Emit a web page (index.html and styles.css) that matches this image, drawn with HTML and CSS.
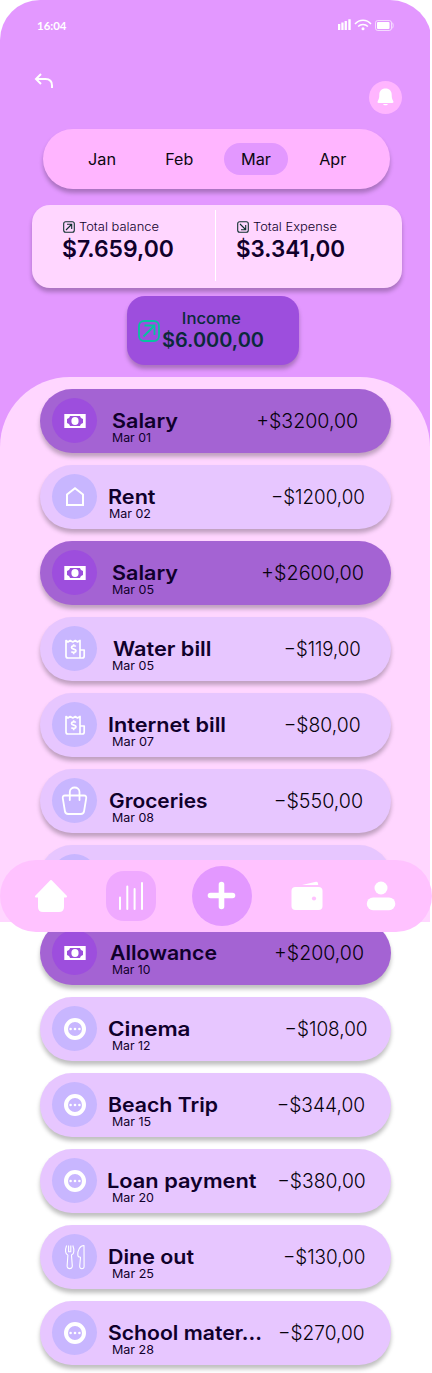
FILE: index.html
```html
<!DOCTYPE html>
<html lang="en">
<head>
<meta charset="utf-8">
<meta name="viewport" content="width=device-width, initial-scale=1">
<title>Transactions</title>
<link rel="stylesheet" href="styles.css">
</head>
<body>
<svg class="sprite" aria-hidden="true">
  <symbol id="cash" viewBox="0 0 45 45">
    <path fill="#fff" d="M12.300 16h21.400v14H12.300z"/>
    <path fill="#9d4edd" d="M18 18h10c.5 2 1.500 2.500 3 3v4c-1.500.5-2.500 1-3 3H18c-.5-2-1.500-2.500-3-3v-4c1.500-.5 2.500-1 3-3z"/>
    <ellipse cx="23" cy="23" rx="3.600" ry="4" fill="#fff"/>
  </symbol>
  <symbol id="home-line" viewBox="0 0 45 45">
    <path class="line" d="M15 31V20.500l8-6.200 8 6.200V31z"/>
  </symbol>
  <symbol id="bill" viewBox="0 0 45 45">
    <path class="line thin" d="M14 14.500l2 1.500 2.200-1.500 2.600 1.500 2.500-1.500 2.200 1.500 2.500-1.500V32H16a2 2 0 0 1-2-2zM28 24h4.200v6a2 2 0 0 1-2 2H28"/>
    <path class="line thin" d="M23.800 20.500c-1-1.200-4.300-.9-4.300 1s4.500 1.300 4.500 3.300-3.600 2.100-4.600.7M21.700 18.300v1.500M21.700 26.200v2"/>
  </symbol>
  <symbol id="bag" viewBox="0 0 45 45">
    <path class="line soft" d="M13 17.500h19c1.800 0 2.500 1.200 2.200 2.800l-2.100 12.700c-.3 2-1.500 3-3.300 3H16.200c-1.800 0-3-1-3.300-3l-2.100-12.700C10.500 18.700 11.200 17.500 13 17.500zM17.800 22V14c0-6 9.700-6 9.700 0v8"/>
  </symbol>
  <symbol id="more" viewBox="0 0 45 45">
    <circle cx="23" cy="23" r="9" fill="none" stroke="#fff" stroke-width="4"/>
    <circle cx="18.600" cy="23" r="1.300" fill="#fff"/><circle cx="23" cy="23" r="1.300" fill="#fff"/><circle cx="27.400" cy="23" r="1.300" fill="#fff"/>
  </symbol>
  <symbol id="dine" viewBox="0 0 45 45">
    <path class="line fine" d="M14.600 11.500c-.8 2-1.200 4-1 6.200.1 1.800 1 2.600 2.300 3.400l-.8 11c-.1 3.300 5.300 3.300 5.200 0l-.8-11c1.400-.8 2.200-1.600 2.300-3.400.2-2.200-.2-4.200-1-6.200M16.600 11.500v6.300h2.200v-6.300M18.800 17.800M32 11.500c-4 0-6.500 4.500-6.200 9.800.1 1.500.8 2 2.700 2l-.8 9c-.1 3.200 4.600 3.200 4.400 0z"/>
  </symbol>
</svg>

<main class="screen">
  <header class="status">
    <span class="clock" data-fit="29.5">16:04</span>
    <svg class="signals" viewBox="0 0 58 14" aria-hidden="true">
      <path fill="#fff" d="M1 6h2.300v6H1zM4.300 4.500h2.300V12H4.300zM7.600 3h2.300v9H7.600zM11.300 1.200h2.400V12h-2.400z"/>
      <g fill="none" stroke="#fff" stroke-width="1.500"><path d="M18 6c4.500-4.900 11.500-4.900 16 0"/><path d="M21.100 8.600c2.700-2.900 7.100-2.900 9.800 0"/></g>
      <circle cx="26" cy="10.800" r="1.500" fill="#fff"/>
      <rect x="38.500" y="2.500" width="16" height="10" rx="2.300" fill="none" stroke="#fff" stroke-opacity=".65"/>
      <rect x="40" y="4" width="12.500" height="7" rx="1" fill="#fff"/>
      <path d="M55 4.500c1.600 1 1.600 5 0 6" fill="none" stroke="#fff" stroke-opacity=".65"/>
    </svg>
  </header>

  <div class="actions">
    <svg class="back" viewBox="0 0 20 18" aria-label="Back"><path d="M7 2L2 7l5 5M2 7h9.500c4 0 6.500 2.500 6.500 6.500V16" fill="none" stroke="#fff" stroke-width="2"/></svg>
    <span class="bell"><svg viewBox="0 0 33 33" aria-label="Notifications"><path fill="#fff" d="M16.500 7.500c-4 0-6.200 2.700-6.200 6.300 0 3.300-.6 4.800-1.500 6.200-.6 1-.2 2 .9 2h13.600c1.100 0 1.500-1 .9-2-.9-1.400-1.500-2.900-1.500-6.200 0-3.600-2.200-6.300-6.200-6.300zM14 23h5c-.7 1.800-4.300 1.800-5 0z"/></svg></span>
  </div>

  <nav class="months">
    <span class="month"><b data-fit="28">Jan</b></span>
    <span class="month"><b data-fit="28">Feb</b></span>
    <span class="month selected"><b data-fit="30">Mar</b></span>
    <span class="month"><b data-fit="27">Apr</b></span>
  </nav>

  <section class="totals">
    <div class="total">
      <p class="caption"><svg viewBox="0 0 12 12"><rect x=".7" y=".7" width="10.600" height="10.600" rx="2"/><path d="M3 9l5.500-5.500M4 3.300h4.700V8"/></svg><span data-fit="80">Total balance</span></p>
      <p class="sum"><span data-fit="112">$7.659,00</span></p>
    </div>
    <div class="total">
      <p class="caption"><svg viewBox="0 0 12 12"><rect x=".7" y=".7" width="10.600" height="10.600" rx="2"/><path d="M3 3l5.500 5.500M4 8.700h4.700V4"/></svg><span data-fit="84">Total Expense</span></p>
      <p class="sum"><span data-fit="109">$3.341,00</span></p>
    </div>
  </section>

  <section class="income">
    <svg class="income-icon" viewBox="0 0 22 22"><rect x="1" y="1" width="20" height="20" rx="5"/><path d="M5.500 16.500L16 6M6.500 5.500H16.500V15"/></svg>
    <div class="income-text">
      <span class="income-label"><b data-fit="59">Income</b></span>
      <span class="income-sum" data-fit="102">$6.000,00</span>
    </div>
  </section>

  <section class="sheet" id="list"></section>

  <nav class="tabbar">
    <svg viewBox="0 0 432 72" aria-hidden="true">
      <path fill="#fff" stroke="#fff" stroke-width="2" stroke-linejoin="round" d="M51 21L36 36.500h3V47q0 4 4 4h16q4 0 4-4V36.500h3z"/>
      <rect x="106" y="11" width="50" height="50" rx="18" fill="#efa9ff"/>
      <path d="M120 37.500v11.500M127.300 26.500V49M134.600 29v20M142 23v26" stroke="#fff" stroke-width="2" stroke-linecap="round"/>
      <circle cx="222" cy="36" r="30" fill="#e398ff"/>
      <path d="M221.500 24.500v22M210.500 35.500h22" stroke="#fff" stroke-width="5.600" stroke-linecap="round"/>
      <path fill="#fff" d="M302 25l14-3.300c1.500-.2 2.200 1 2.200 3.300z"/>
      <rect x="291.500" y="27" width="31" height="23" rx="4" fill="#fff"/><circle cx="314" cy="38.500" r="2.100" fill="#ffc2ff"/>
      <circle cx="381" cy="28" r="6.500" fill="#fff"/><rect x="366.800" y="37.500" width="28.500" height="12.700" rx="6.300" fill="#fff"/>
    </svg>
  </nav>
</main>
<script src="app.js"></script>
</body>
</html>
```
FILE: styles.css
```css
* { box-sizing: border-box; }
body { margin: 0; background: #fff; font-family: Inter, "Noto Sans", sans-serif; color: #10002b; }
p { margin: 0; }
.sprite { position: absolute; width: 0; height: 0; }
[data-fit] { display: inline-block; white-space: nowrap; font-weight: inherit; transform-origin: 0 50%; }

.screen { position: relative; display: flex; flex-direction: column; width: 432px; height: 1373px; overflow: hidden;
  background: linear-gradient(#e398ff, #e398ff) 0 0 / 430px 600px no-repeat; border-radius: 40px 42px 0 0; }
.status { display: flex; justify-content: space-between; align-items: center; height: 52px; padding: 0 37px 2px 36.500px; color: #fff; }
.clock { font: 700 12px Lato, sans-serif; }
.signals { width: 58px; height: 14px; }
.actions { display: flex; justify-content: space-between; height: 77px; padding: 0 30px 0 34px; }
.back { width: 20px; height: 18px; margin-top: 20px; }
.bell { width: 33px; height: 33px; margin-top: 29px; border-radius: 50%; background: #ffb5ff; }
.bell svg { display: block; }

.months { display: flex; align-items: center; gap: 12.700px; width: 347px; height: 60px; margin-left: 43px; padding-left: 27.500px;
  border-radius: 30px; background: #ffb5ff; box-shadow: 0 4px 4px rgba(0,0,0,.25); font-size: 15.200px; color: #0b0710; }
.month { display: flex; justify-content: center; align-items: center; width: 64px; height: 32px; border-radius: 16px; }
.month b { transform-origin: 50% 50%; }
.selected { background: #e398ff; }

.totals { display: flex; width: 370px; height: 83px; margin: 16px 0 0 32px; padding: 5px 0 7px; border-radius: 18px;
  background: #ffd6ff; box-shadow: 0 4px 4px rgba(0,0,0,.25); }
.total { width: 183px; padding: 9px 0 0 30px; }
.total + .total { width: 187px; padding-left: 20.500px; border-left: 1px solid #fff; }
.caption { display: flex; align-items: center; gap: 4px; height: 15px; padding-left: .5px; font-size: 12px; font-weight: 300; }
.caption svg { width: 12px; height: 12px; fill: none; stroke: #10302f; stroke-width: 1.100; }
.sum { height: 28px; line-height: 29px; font-size: 23.500px; font-weight: 600; margin-left: -.5px; }

.income { display: flex; gap: 2px; width: 172px; height: 69px; margin: 8px 0 0 127px; padding: 0 0 0 11px; border-radius: 18px;
  background: #9d4edd; box-shadow: 0 4px 4px rgba(0,0,0,.25); color: #0b2a3a; }
.income-icon { width: 22px; height: 22px; margin-top: 24px; fill: none; stroke: #06c3a0; stroke-width: 1.800; }
.income-text { padding-top: 13px; }
.income-label { display: flex; justify-content: center; height: 20px; line-height: 20px; font-size: 15.500px; font-weight: 500; }
.income-label b { transform-origin: 50% 50%; }
.income-sum { height: 22px; line-height: 22px; font-size: 19.500px; font-weight: 600; }

.sheet { display: flex; flex-direction: column; gap: 12px; width: 430px; height: 996px; margin-top: 12px; padding: 12px 0 0 40px;
  border-radius: 70px 70px 0 0; background: linear-gradient(#ffd6ff 545px, #fff 545px); flex: none; }
.row { display: flex; flex: none; width: 351px; height: 64px; padding-left: 12px; border-radius: 32px; background: #e7c6ff;
  box-shadow: 0 4px 4px rgba(0,0,0,.25); }
.row.gain { background: #a463d3; }
.icon { flex: none; width: 45px; height: 45px; margin-top: 9px; border-radius: 50%; background: #c8b6ff; }
.gain .icon { background: #9d4edd; }
.icon svg { display: block; width: 45px; height: 45px; }
.line { fill: none; stroke: #fff; stroke-width: 2; }
.thin { stroke-width: 1.700; stroke-linejoin: round; }
.soft { stroke-width: 1.800; stroke-linecap: round; }
.fine { stroke-width: 1.100; stroke-linejoin: round; }
.label { padding-top: 20px; }
.name { display: block; height: 22px; line-height: 24px; font-size: 20.200px; font-weight: 600; }
.date { display: block; height: 15px; line-height: 15px; font-size: 11.800px; font-weight: 400; }
.amount { margin-left: auto; padding-top: 20px; line-height: 24px; font-size: 20px; font-weight: 300; color: #07020c; }
.amount [data-fit] { transform-origin: 100% 50%; }

.tabbar { position: absolute; left: 0; top: 860px; width: 432px; height: 72px; border-radius: 36px; background: #ffc2ff; }
.tabbar svg { display: block; }
```
FILE: app.js
```js
// icon, name, name offset, name width, date, date offset, amount, amount width, right inset
const rows = [
  ["cash", "Salary", 14.5, 66, "Mar 01", 14.5, "+$3200,00", 102, 32.5],
  ["home-line", "Rent", 11, 47.5, "Mar 02", 11.5, "-$1200,00", 94, 26],
  ["cash", "Salary", 14.5, 66, "Mar 05", 14.5, "+$2600,00", 103, 27],
  ["bill", "Water bill", 15.5, 98.5, "Mar 05", 14.5, "-$119,00", 77, 30],
  ["bill", "Internet bill", 11, 118, "Mar 07", 14.5, "-$80,00", 77, 30],
  ["bag", "Groceries", 11.5, 98.5, "Mar 08", 14.5, "-$550,00", 89.5, 28],
  ["more", "", 12, 0, "", 15, "", 0, 28],
  ["cash", "Allowance", 12.5, 107, "Mar 10", 14.5, "+$200,00", 90, 27],
  ["more", "Cinema", 11, 82.5, "Mar 12", 14.5, "-$108,00", 83, 23],
  ["more", "Beach Trip", 11, 110, "Mar 15", 14.5, "-$344,00", 88.5, 25.5],
  ["more", "Loan payment", 9.5, 149.5, "Mar 20", 14.5, "-$380,00", 88.5, 25.5],
  ["dine", "Dine out", 10.5, 86, "Mar 25", 14.5, "-$130,00", 82.5, 25.5],
  ["more", "School mater...", 11, 154, "Mar 28", 14.5, "-$270,00", 86.5, 26.5],
];
const dateWidths = { "Mar 01": 39, "Mar 10": 38.5, "Mar 12": 38.5, "Mar 15": 39 };

document.getElementById("list").innerHTML = rows.map(([icon, name, x, w, date, dx, amount, aw, inset]) => `
  <article class="row ${icon === "cash" ? "gain" : ""}">
    <span class="icon"><svg><use href="#${icon}"/></svg></span>
    <div class="label">
      <span class="name" style="margin-left:${x}px"><span data-fit="${w}">${name}</span></span>
      <span class="date" style="margin-left:${dx}px"><span data-fit="${dateWidths[date] || 42}">${date}</span></span>
    </div>
    <span class="amount" style="margin-right:${inset}px"><span data-fit="${aw}">${amount.replace("-", "−")}</span></span>
  </article>`).join("");

document.querySelectorAll("[data-fit]").forEach((el) => {
  const width = el.getBoundingClientRect().width;
  if (width > 0) el.style.transform = `scaleX(${Number(el.dataset.fit) / width})`;
});
```
